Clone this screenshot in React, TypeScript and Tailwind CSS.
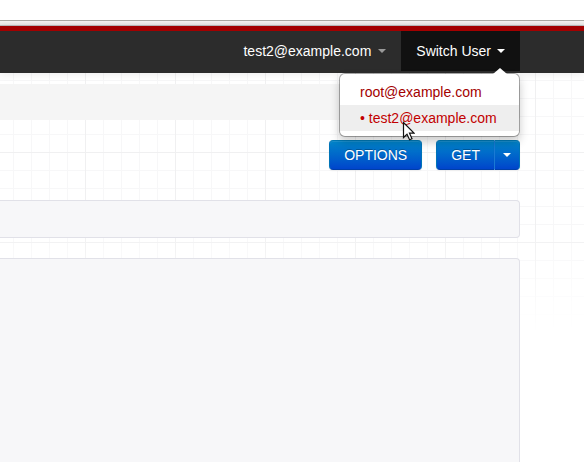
import React from "react";

function Caret({ className = "" }: { className?: string }) {
  return (
    <span
      aria-hidden="true"
      className={`inline-block h-0 w-0 border-x-4 border-t-4 border-x-transparent ${className}`}
    />
  );
}

function UserMenu() {
  return (
    <ul className="absolute top-full right-0 z-10 mt-0.5 w-[181px] rounded-md border border-black/30 bg-white bg-clip-padding py-[5px] shadow-[0_5px_10px_rgba(0,0,0,0.2)]">
      <li className="absolute -top-1.5 right-3 h-0 w-0 border-x-7 border-b-6 border-x-transparent border-b-white" aria-hidden="true" />
      <li>
        <a href="#root" className="block px-5 py-[3px] text-[#a30000]">
          root@example.com
        </a>
      </li>
      <li className="relative">
        <a href="#test2" className="block bg-[#eeeeee] px-5 py-[3px] whitespace-nowrap text-[#c20000]">
          • test2@example.com
        </a>
        <svg
          aria-hidden="true"
          viewBox="0 0 13 20"
          className="pointer-events-none absolute top-4 left-[62px] h-5 w-[13px]"
        >
          <path
            d="M1.5 1.5V16.5L5 13.2L7.6 18.8L10 17.7L7.5 12.2H12Z"
            fill="#fff"
            stroke="#111"
            strokeWidth="1.2"
          />
        </svg>
      </li>
    </ul>
  );
}

const blueButton =
  "border border-[#0074b8] border-t-[#0078b4] border-b-[#003fa8] bg-linear-to-b from-[#0084c8] to-[#0044cc] text-white [text-shadow:0_-1px_0_rgba(0,0,0,0.25)] shadow-[inset_0_1px_0_rgba(255,255,255,0.1),0_1px_2px_rgba(0,0,0,0.05)]";

export default function App() {
  return (
    <div className="flex h-screen flex-col overflow-hidden bg-white font-['Liberation_Sans',Arial,sans-serif] text-sm leading-5">
      <div className="h-5 shrink-0" />
      <div className="h-1.5 shrink-0 border-y border-t-[#a9a8a2] border-b-[#bcbcbc] bg-linear-to-b from-[#f4f3f1] to-[#e7e6e4]" />

      <header className="relative z-10 shrink-0 border-t-5 border-[#a30000] bg-[#2c2c2c] pr-16 pb-0.5 shadow-[0_1px_8px_rgba(0,0,0,0.08)]">
        <nav className="flex justify-end text-white">
          <button type="button" className="flex items-center gap-[7px] px-[15px] py-2.5">
            test2@example.com
            <Caret className="border-t-[#999999]" />
          </button>
          <div className="relative">
            <button
              type="button"
              aria-expanded="true"
              className="flex items-center gap-1.5 bg-[#111111] px-[15px] py-2.5"
            >
              Switch User
              <Caret className="border-t-white" />
            </button>
            <UserMenu />
          </div>
        </nav>
      </header>

      <div className="relative flex min-h-0 flex-1 flex-col">
        <div
          aria-hidden="true"
          className="absolute inset-x-0 top-0 h-[260px] bg-[linear-gradient(to_right,#f0f0f1_1px,transparent_1px),linear-gradient(to_bottom,#f0f0f1_1px,transparent_1px),linear-gradient(to_right,#f7f7f8_1px,transparent_1px),linear-gradient(to_bottom,#f7f7f8_1px,transparent_1px)] bg-size-[90px_90px,90px_90px,18px_18px,18px_18px] bg-position-[85px_79px,85px_79px,13px_7px,13px_7px] mask-[linear-gradient(to_bottom,black_60%,transparent)]"
        />
        <main className="relative mr-16 flex min-h-0 flex-1 flex-col pt-[11px]">
          <div className="h-9 shrink-0 rounded-r bg-[#f5f5f5]" />
          <div className="mt-5 flex shrink-0 justify-end gap-3.5">
            <button type="button" className={`h-[30px] rounded px-3.5 ${blueButton}`}>
              OPTIONS
            </button>
            <div className="flex">
              <button type="button" className={`h-[30px] rounded-l border-r-0 px-3.5 ${blueButton}`}>
                GET
              </button>
              <button
                type="button"
                aria-label="Select a GET format"
                className={`flex h-[30px] items-center rounded-r border-l-[#1a7ad4] px-2 ${blueButton}`}
              >
                <Caret className="border-t-white" />
              </button>
            </div>
          </div>
          <div className="mt-[30px] h-[38px] shrink-0 rounded-r border border-l-0 border-[#e1e1e8] bg-[#f7f7f9]" />
          <div className="mt-5 min-h-0 flex-1 rounded-tr border-t border-r border-[#e1e1e8] bg-[#f7f7f9]" />
        </main>
      </div>
    </div>
  );
}
